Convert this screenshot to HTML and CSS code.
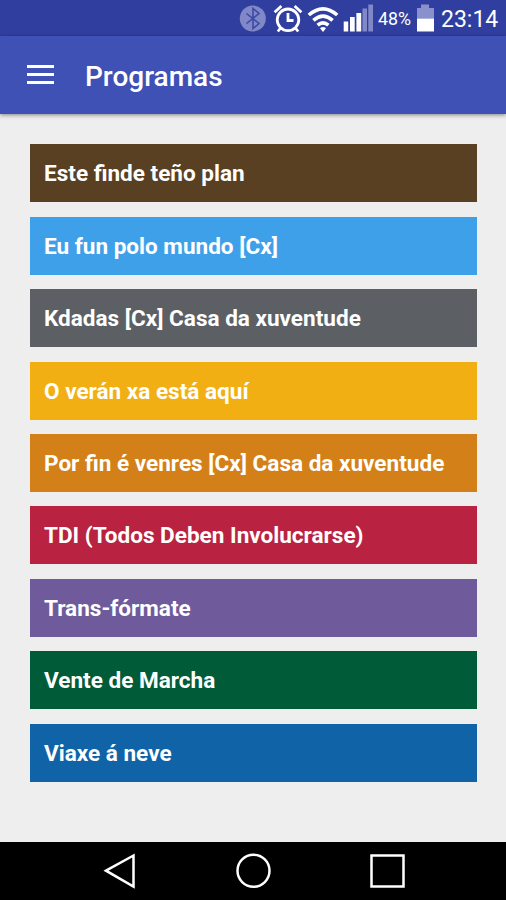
FILE: index.html
```html
<!DOCTYPE html>
<html lang="gl">
<head>
<meta charset="UTF-8">
<meta name="viewport" content="width=device-width, initial-scale=1.0">
<title>Programas</title>
<link rel="stylesheet" href="styles.css">
</head>
<body>
<div class="status-bar">
    <svg class="status-icons" width="136" height="36" viewBox="238 0 136 36">
        <!-- bluetooth -->
        <circle cx="252.8" cy="18.5" r="13" fill="#8088c8"/>
        <path d="M246.500 13.500l12.500 10-6 5v-20l6 5-12.500 10" fill="none" stroke="#3d4aa5" stroke-width="1.600"/>
        <!-- alarm -->
        <g fill="none" stroke="#fff" stroke-width="2.8">
            <circle cx="288" cy="19.8" r="10.8"/>
            <path d="M288 13v7.500h5.500M274.600 12.200l6.800-6.200M301.400 12.200l-6.800-6.200M281 27.500l-3.200 4M295 27.500l3.200 4"/>
        </g>
        <!-- wifi -->
        <g fill="none" stroke="#fff" stroke-width="3.600">
            <path d="M308.800 15q14.200-12.400 28.400 0"/>
            <path d="M313.400 20.300q9.600-8.400 19.200 0"/>
            <path d="M317.600 25.200q5.400-4.600 10.800 0"/>
        </g>
        <path d="M323 32l-3-3.800q3-2.400 6 0z" fill="#fff"/>
        <!-- signal -->
        <path d="M343.700 21.500h4.500v10h-4.500zM350 17h4.700v14.500H350zM356.400 13h4.800v18.500h-4.800z" fill="#fff"/>
        <path d="M362.500 8.500h4.500v23h-4.500zM368.300 4.500h4.700v27h-4.700z" fill="#8088c8"/>
    </svg>
    <span class="battery-text">48%</span>
    <svg class="battery" width="18" height="36" viewBox="416 0 18 36">
        <path d="M417 8h4V4.500h8V8h5v10.500h-17z" fill="#8a90cc"/>
        <path d="M417 18.500h17v13h-17z" fill="#fff"/>
    </svg>
    <span class="clock">23:14</span>
</div>

<div class="toolbar">
    <div class="menu-button">
        <span></span>
        <span></span>
        <span></span>
    </div>
    <h1>Programas</h1>
</div>

<div class="program-list">
    <div class="program brown">Este finde teño plan</div>
    <div class="program sky">Eu fun polo mundo [Cx]</div>
    <div class="program gray">Kdadas [Cx] Casa da xuventude</div>
    <div class="program yellow">O verán xa está aquí</div>
    <div class="program orange">Por fin é venres [Cx] Casa da xuventude</div>
    <div class="program red">TDI (Todos Deben Involucrarse)</div>
    <div class="program purple">Trans-fórmate</div>
    <div class="program green">Vente de Marcha</div>
    <div class="program blue">Viaxe á neve</div>
</div>

<div class="nav-bar">
    <svg width="506" height="58" viewBox="0 842 506 58">
        <g fill="none" stroke="#fff" stroke-width="2.5">
            <path d="M106 870.700L133.500 855.500v31z"/>
            <circle cx="253.500" cy="870.800" r="16"/>
            <path d="M371.500 855.500h32v31h-32z"/>
        </g>
    </svg>
</div>
</body>
</html>
```

FILE: styles.css
```css
body {
    display: flex;
    flex-direction: column;
    height: 900px;
    margin: 0;
    background-color: #eeeeee;
    color: white;
    font-family: Roboto, "Liberation Sans", sans-serif;
    overflow: hidden;
}
.status-bar {
    display: flex;
    align-items: center;
    height: 36px;
    padding-left: 238px;
    background-color: #303f9f;
}
.status-icons, .battery {
    flex: none;
}
.battery-text {
    width: 38px;
    margin-left: 4px;
    padding-top: 2px;
    font-size: 17.800px;
    line-height: 36px;
}
.clock {
    margin-left: 7px;
    padding-top: 3px;
    font-size: 23px;
    line-height: 36px;
}
.toolbar {
    display: flex;
    align-items: center;
    height: 78px;
    background-color: #3f51b5;
    box-shadow: 0 1px 4px rgba(0, 0, 0, 0.45);
}
.menu-button {
    display: flex;
    flex-direction: column;
    gap: 5px;
    width: 27px;
    margin: 0 31.500px 2px 26.500px;
}
.menu-button span {
    height: 3px;
    background-color: white;
}
.toolbar h1 {
    margin: 0;
    padding-top: 2px;
    font-size: 28px;
    font-weight: 500;
}
.program-list {
    display: flex;
    flex: 1;
    flex-direction: column;
    gap: 14.400px;
    padding: 30.400px 29px 0 30px;
}
.program {
    height: 58px;
    padding-left: 14px;
    font-size: 22.550px;
    font-weight: bold;
    line-height: 60px;
    white-space: nowrap;
}
.brown {
    background-color: #5a4023;
}
.sky {
    background-color: #3fa0ea;
}
.gray {
    background-color: #5c6065;
}
.yellow {
    background-color: #f2af13;
}
.orange {
    background-color: #d48018;
}
.red {
    background-color: #b92341;
}
.purple {
    background-color: #6f5a9c;
}
.green {
    background-color: #005b38;
}
.blue {
    background-color: #1063a7;
}
.nav-bar {
    height: 58px;
    background-color: black;
}
.nav-bar svg {
    display: block;
}
```
